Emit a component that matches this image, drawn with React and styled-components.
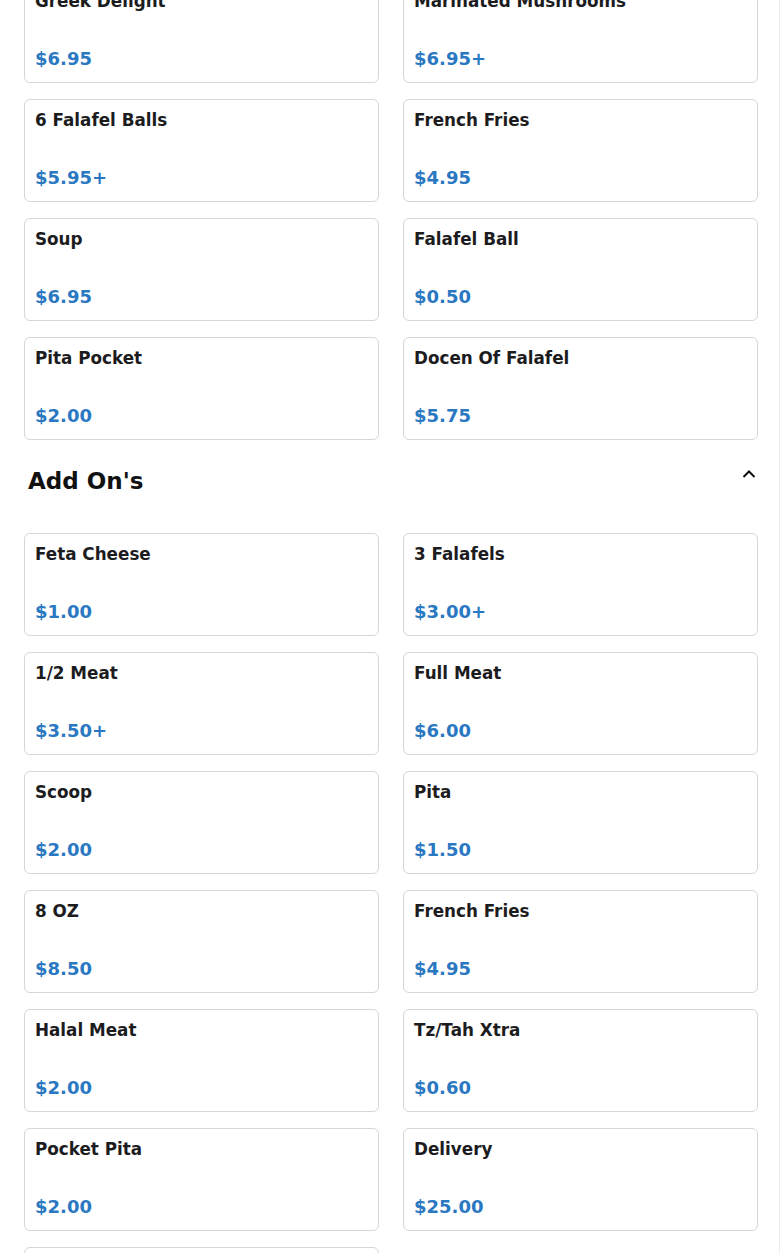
import React from "react";
import styled, { createGlobalStyle } from "styled-components";

const Global = createGlobalStyle`
  html, body { margin: 0; padding: 0; background: #fff; }
  body { font-family: "DejaVu Sans", "Liberation Sans", sans-serif; color: #1c1c1c; overflow: hidden; }
`;

const Page = styled.div`
  width: 780px;
  box-sizing: border-box;
  border-right: 1px solid #ececec;
  padding: 0 21px 0 24px;
  margin-top: -20px;
  min-height: 1300px;
`;

const Grid = styled.div`
  display: grid;
  grid-template-columns: 1fr 1fr;
  column-gap: 24px;
  row-gap: 16px;
`;

const Card = styled.div`
  height: 103px;
  box-sizing: border-box;
  border: 1px solid #d6d6d6;
  border-radius: 6px;
  padding: 10px 10px 13px;
  display: flex;
  flex-direction: column;
  justify-content: space-between;
  background: #fff;
`;

const Name = styled.div`
  font-size: 16.8px;
  font-weight: 700;
  line-height: 21px;
  color: #1c1c1e;
`;

const Price = styled.div`
  font-size: 18px;
  font-weight: 700;
  line-height: 21px;
  color: #2a78c2;
`;

const SectionHeader = styled.div`
  display: flex;
  align-items: center;
  justify-content: space-between;
  height: 50px;
  margin: 16px 0 27px;
  padding: 0 1px 0 4px;
`;

const SectionTitle = styled.h2`
  margin: 0;
  font-size: 23px;
  font-weight: 700;
  color: #111;
`;

const ChevronIcon = styled.svg`
  margin-top: -14px;
`;

const Chevron = () => (
  <ChevronIcon width="16" height="16" viewBox="0 0 16 16">
    <polyline points="2.5,11 8,5.5 13.5,11" fill="none" stroke="#111" strokeWidth="2" />
  </ChevronIcon>
);

const sides = [
  ["Greek Delight", "$6.95"],
  ["Marinated Mushrooms", "$6.95+"],
  ["6 Falafel Balls", "$5.95+"],
  ["French Fries", "$4.95"],
  ["Soup", "$6.95"],
  ["Falafel Ball", "$0.50"],
  ["Pita Pocket", "$2.00"],
  ["Docen Of Falafel", "$5.75"],
];

const addOns = [
  ["Feta Cheese", "$1.00"],
  ["3 Falafels", "$3.00+"],
  ["1/2 Meat", "$3.50+"],
  ["Full Meat", "$6.00"],
  ["Scoop", "$2.00"],
  ["Pita", "$1.50"],
  ["8 OZ", "$8.50"],
  ["French Fries", "$4.95"],
  ["Halal Meat", "$2.00"],
  ["Tz/Tah Xtra", "$0.60"],
  ["Pocket Pita", "$2.00"],
  ["Delivery", "$25.00"],
  ["Extra Sauce", "$0.75"],
];

const Items = ({ list }) => (
  <Grid>
    {list.map(([n, p], i) => (
      <Card key={i}>
        <Name>{n}</Name>
        <Price>{p}</Price>
      </Card>
    ))}
  </Grid>
);

export default function App() {
  return (
    <>
      <Global />
      <Page>
        <Items list={sides} />
        <SectionHeader>
          <SectionTitle>Add On's</SectionTitle>
          <Chevron />
        </SectionHeader>
        <Items list={addOns} />
      </Page>
    </>
  );
}
